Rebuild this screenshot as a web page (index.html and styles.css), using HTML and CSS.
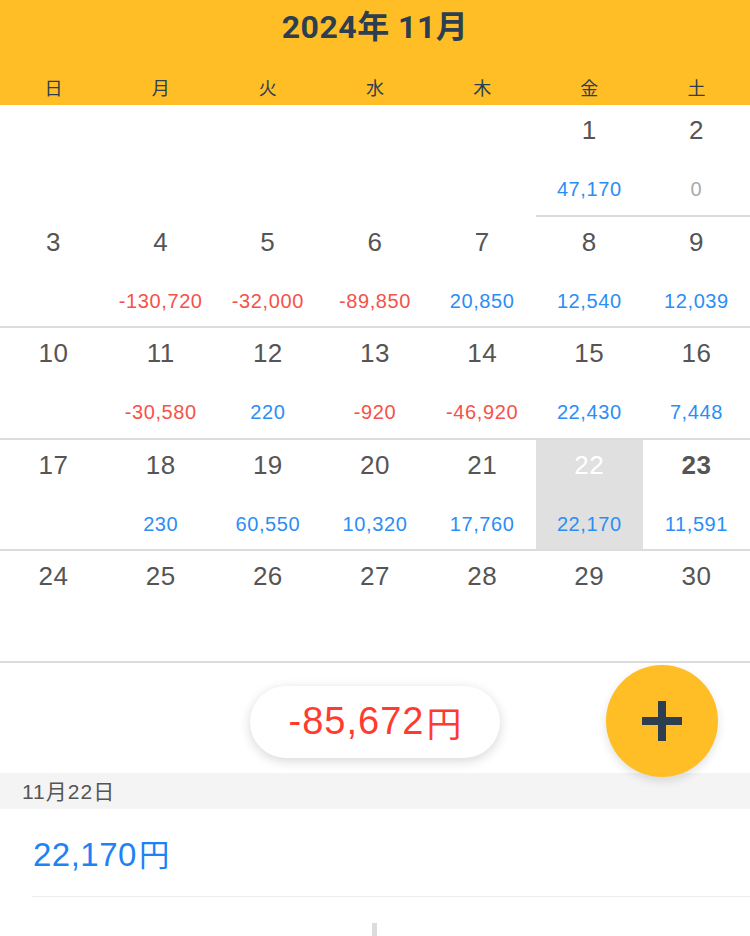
FILE: index.html
```html
<!DOCTYPE html>
<html lang="ja">
<head>
<meta charset="utf-8">
<link rel="stylesheet" href="styles.css">
</head>
<body>
<div class="app">
  <header class="header">
    <div class="title">2024年 11月</div>
    <div class="weekdays">
      <span>日</span><span>月</span><span>火</span><span>水</span><span>木</span><span>金</span><span>土</span>
    </div>
  </header>
  <div class="calendar">
    <div class="cell empty"></div>
    <div class="cell empty"></div>
    <div class="cell empty"></div>
    <div class="cell empty"></div>
    <div class="cell empty"></div>
    <div class="cell"><span class="day">1</span><span class="amt plus">47,170</span></div>
    <div class="cell"><span class="day">2</span><span class="amt zero">0</span></div>

    <div class="cell"><span class="day">3</span><span class="amt"></span></div>
    <div class="cell"><span class="day">4</span><span class="amt minus">-130,720</span></div>
    <div class="cell"><span class="day">5</span><span class="amt minus">-32,000</span></div>
    <div class="cell"><span class="day">6</span><span class="amt minus">-89,850</span></div>
    <div class="cell"><span class="day">7</span><span class="amt plus">20,850</span></div>
    <div class="cell"><span class="day">8</span><span class="amt plus">12,540</span></div>
    <div class="cell"><span class="day">9</span><span class="amt plus">12,039</span></div>

    <div class="cell"><span class="day">10</span><span class="amt"></span></div>
    <div class="cell"><span class="day">11</span><span class="amt minus">-30,580</span></div>
    <div class="cell"><span class="day">12</span><span class="amt plus">220</span></div>
    <div class="cell"><span class="day">13</span><span class="amt minus">-920</span></div>
    <div class="cell"><span class="day">14</span><span class="amt minus">-46,920</span></div>
    <div class="cell"><span class="day">15</span><span class="amt plus">22,430</span></div>
    <div class="cell"><span class="day">16</span><span class="amt plus">7,448</span></div>

    <div class="cell"><span class="day">17</span><span class="amt"></span></div>
    <div class="cell"><span class="day">18</span><span class="amt plus">230</span></div>
    <div class="cell"><span class="day">19</span><span class="amt plus">60,550</span></div>
    <div class="cell"><span class="day">20</span><span class="amt plus">10,320</span></div>
    <div class="cell"><span class="day">21</span><span class="amt plus">17,760</span></div>
    <div class="cell selected"><span class="day">22</span><span class="amt plus">22,170</span></div>
    <div class="cell today"><span class="day">23</span><span class="amt plus">11,591</span></div>

    <div class="cell"><span class="day">24</span><span class="amt"></span></div>
    <div class="cell"><span class="day">25</span><span class="amt"></span></div>
    <div class="cell"><span class="day">26</span><span class="amt"></span></div>
    <div class="cell"><span class="day">27</span><span class="amt"></span></div>
    <div class="cell"><span class="day">28</span><span class="amt"></span></div>
    <div class="cell"><span class="day">29</span><span class="amt"></span></div>
    <div class="cell"><span class="day">30</span><span class="amt"></span></div>
  </div>
  <section class="summary">
    <div class="total">-85,672<span class="yen">円</span></div>
    <button class="fab" aria-label="追加">
      <svg width="44" height="44" viewBox="0 0 44 44"><rect x="18" y="2" width="8" height="40" fill="#2c3e50"/><rect x="2" y="18" width="40" height="8" fill="#2c3e50"/></svg>
    </button>
  </section>
  <div class="date-bar">11月22日</div>
  <div class="entry">
    <div class="entry-amt">22,170<span class="yen">円</span></div>
  </div>
  <div class="more"><span class="tick"></span></div>
</div>
</body>
</html>
```
FILE: styles.css
```css
html, body {
  margin: 0;
  padding: 0;
  background: #fff;
}
body {
  font-family: "Liberation Sans", "Noto Sans CJK JP", sans-serif;
  color: #555;
  width: 750px;
  height: 936px;
  overflow: hidden;
}
.app {
  position: relative;
  width: 750px;
}
.header {
  background: #ffbe26;
  height: 105px;
  display: flex;
  flex-direction: column;
}
.title {
  font-family: Roboto, "Noto Sans CJK JP", sans-serif;
  font-weight: 700;
  font-size: 32px;
  color: #2c3e50;
  text-align: center;
  height: 52px;
  line-height: 54px;
  letter-spacing: 0.5px;
}
.weekdays {
  display: grid;
  grid-template-columns: repeat(7, 1fr);
  font-family: "Noto Sans CJK JP", sans-serif;
  font-size: 18px;
  color: #2c3e50;
  text-align: center;
  margin-top: 20px;
  line-height: 30px;
}
.calendar {
  display: grid;
  grid-template-columns: repeat(7, 1fr);
  grid-auto-rows: 111.5px;
}
.cell {
  border-bottom: 2px solid #dcdcdc;
  display: flex;
  flex-direction: column;
  align-items: center;
}
.cell.empty {
  border-bottom-color: transparent;
}
.day {
  font-size: 26px;
  color: #555;
  margin-top: 10px;
  line-height: 30px;
  letter-spacing: 0.5px;
}
.amt {
  font-size: 20px;
  letter-spacing: 0.6px;
  margin-top: 33px;
  line-height: 22px;
  height: 22px;
}
.amt.plus { color: #2b8ef5; }
.amt.minus { color: #f5524a; }
.amt.zero { color: #aaa; }
.cell.selected {
  background: #e0e0e0;
}
.cell.selected .day {
  color: #fff;
}
.cell.today .day {
  font-weight: 700;
}
.summary {
  height: 110px;
  display: flex;
  align-items: flex-start;
  justify-content: center;
  position: relative;
}
.total {
  margin-top: 23px;
  width: 250px;
  height: 72px;
  border-radius: 36px;
  background: #fff;
  box-shadow: 0 3px 12px rgba(0,0,0,0.16);
  color: #ff3b30;
  font-size: 38px;
  letter-spacing: 1px;
  display: flex;
  align-items: center;
  justify-content: center;
}
.yen {
  font-family: "Noto Sans CJK JP", sans-serif;
  font-size: 0.92em;
  margin-left: 2px;
  letter-spacing: 0;
}
.fab {
  position: absolute;
  left: 606px;
  top: 2px;
  width: 112px;
  height: 112px;
  border-radius: 50%;
  border: none;
  background: #ffbe26;
  box-shadow: 0 4px 10px rgba(0,0,0,0.12);
  display: flex;
  align-items: center;
  justify-content: center;
  padding: 0;
  z-index: 2;
}
.date-bar {
  background: #f4f4f4;
  height: 36px;
  line-height: 38px;
  padding-left: 22px;
  font-size: 21px;
  letter-spacing: 1px;
  color: #555;
}
.entry {
  margin-left: 32px;
  height: 87px;
  border-bottom: 1px solid #ececec;
  display: flex;
  align-items: center;
}
.entry-amt {
  color: #1e82f5;
  font-size: 33px;
  margin-left: 1px;
  margin-top: 2px;
  letter-spacing: 0.5px;
}
.more {
  height: 40px;
  display: flex;
  justify-content: center;
}
.tick {
  width: 5px;
  height: 14px;
  background: #dcdcdc;
  margin-top: 26px;
  margin-left: -2px;
}
```
